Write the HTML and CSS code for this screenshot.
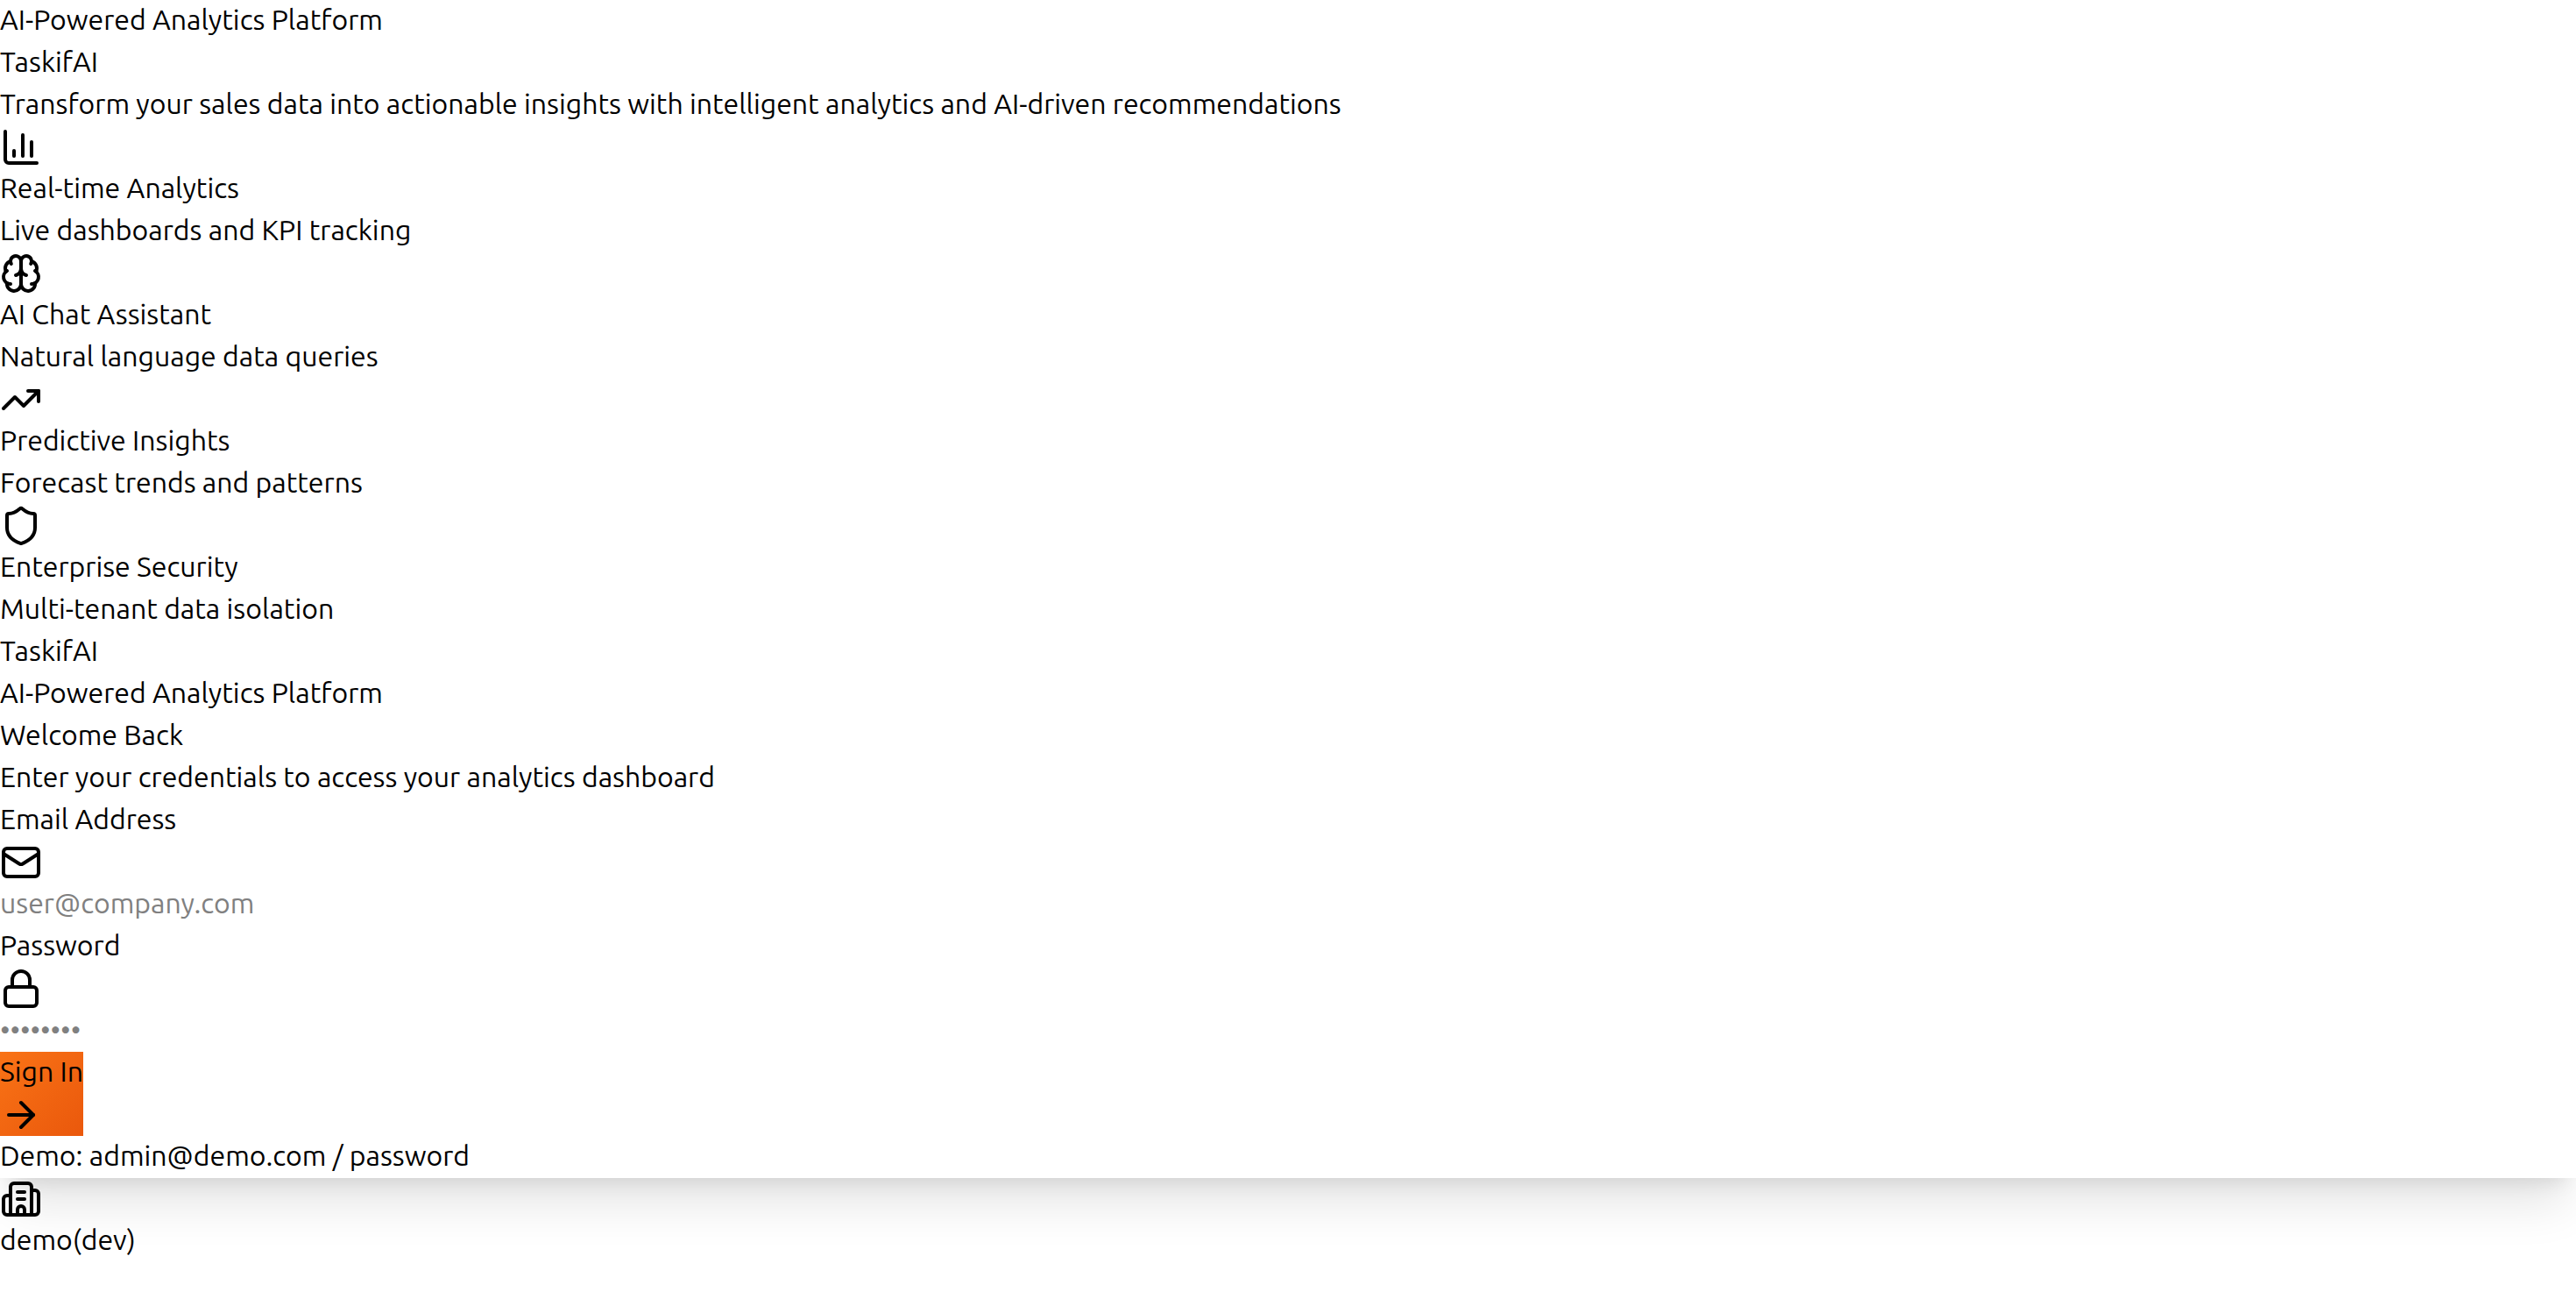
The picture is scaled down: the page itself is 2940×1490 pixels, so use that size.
FILE: index.html
```html
<!DOCTYPE html>
<html lang="en">
<head>
<meta charset="utf-8">
<meta name="viewport" content="width=device-width, initial-scale=1">
<title>TaskifAI</title>
<link rel="stylesheet" href="styles.css">
</head>
<body>
<main class="login">
  <section class="intro">
    <p class="line">AI-Powered Analytics Platform</p>
    <h1 class="line">TaskifAI</h1>
    <p class="line">Transform your sales data into actionable insights with intelligent analytics and AI-driven recommendations</p>
    <article>
      <svg class="icon" viewBox="0 0 24 24" aria-hidden="true"><path d="M3 3v16a2 2 0 0 0 2 2h16"/><path d="M18 17V9"/><path d="M13 17V5"/><path d="M8 17v-3"/></svg>
      <h2 class="line">Real-time Analytics</h2>
      <p class="line">Live dashboards and KPI tracking</p>
    </article>
    <article>
      <svg class="icon" viewBox="0 0 24 24" aria-hidden="true"><path d="M12 18V5"/><path d="M15 13a4.17 4.17 0 0 1-3-4 4.17 4.17 0 0 1-3 4"/><path d="M17.598 6.5A3 3 0 1 0 12 5a3 3 0 1 0-5.598 1.5"/><path d="M17.997 5.125a4 4 0 0 1 2.526 5.77"/><path d="M18 18a4 4 0 0 0 2-7.464"/><path d="M19.967 17.483A4 4 0 1 1 12 18a4 4 0 1 1-7.967-.517"/><path d="M6 18a4 4 0 0 1-2-7.464"/><path d="M6.003 5.125a4 4 0 0 0-2.526 5.77"/></svg>
      <h2 class="line">AI Chat Assistant</h2>
      <p class="line">Natural language data queries</p>
    </article>
    <article>
      <svg class="icon" viewBox="0 0 24 24" aria-hidden="true"><path d="M16 7h6v6"/><path d="m22 7-8.500 8.500-5-5L2 17"/></svg>
      <h2 class="line">Predictive Insights</h2>
      <p class="line">Forecast trends and patterns</p>
    </article>
    <article>
      <svg class="icon" viewBox="0 0 24 24" aria-hidden="true"><path d="M20 13c0 5-3.500 7.500-7.660 8.950a1 1 0 0 1-.67-.01C7.500 20.500 4 18 4 13V6a1 1 0 0 1 1-1c2 0 4.500-1.200 6.240-2.720a1.170 1.170 0 0 1 1.520 0C14.510 3.810 17 5 19 5a1 1 0 0 1 1 1z"/></svg>
      <h2 class="line">Enterprise Security</h2>
      <p class="line">Multi-tenant data isolation</p>
    </article>
  </section>
  <header>
    <h2 class="line">TaskifAI</h2>
    <p class="line">AI-Powered Analytics Platform</p>
  </header>
  <section class="card">
    <h2 class="line">Welcome Back</h2>
    <p class="line">Enter your credentials to access your analytics dashboard</p>
    <form>
      <label class="line" for="email">Email Address</label>
      <svg class="icon" viewBox="0 0 24 24" aria-hidden="true"><path d="m22 7-8.991 5.727a2 2 0 0 1-2.009 0L2 7"/><rect x="2" y="4" width="20" height="16" rx="2"/></svg>
      <input class="line input" id="email" type="email" placeholder="user@company.com">
      <label class="line" for="password">Password</label>
      <svg class="icon" viewBox="0 0 24 24" aria-hidden="true"><rect x="3" y="11" width="18" height="11" rx="2"/><path d="M7 11V7a5 5 0 0 1 10 0v4"/></svg>
      <input class="line input" id="password" type="password" placeholder="••••••••">
      <button class="submit" type="submit">
        <span class="line">Sign In</span>
        <svg class="icon" viewBox="0 0 24 24" aria-hidden="true"><path d="M5 12h14"/><path d="m12 5 7 7-7 7"/></svg>
      </button>
    </form>
    <p class="line">Demo: admin@demo.com / password</p>
  </section>
  <footer class="tenant">
    <svg class="icon" viewBox="0 0 24 24" aria-hidden="true"><path d="M10 12h4"/><path d="M10 8h4"/><path d="M14 21v-3a2 2 0 0 0-4 0v3"/><path d="M6 10H4a2 2 0 0 0-2 2v7a2 2 0 0 0 2 2h16a2 2 0 0 0 2-2V9a2 2 0 0 0-2-2h-2"/><path d="M6 21V5a2 2 0 0 1 2-2h8a2 2 0 0 1 2 2v16"/></svg>
    <p class="line">demo(dev)</p>
  </footer>
</main>
</body>
</html>
```
FILE: styles.css
```css
*, *::before, *::after {
  box-sizing: border-box;
  margin: 0;
  padding: 0;
  border: 0;
}

body {
  background: #fff;
  color: #000;
  font-family: Ubuntu, "Noto Sans", sans-serif;
  font-size: 32px;
  line-height: 44px;
  overflow-x: hidden;
}

h1, h2 {
  font-size: inherit;
  font-weight: inherit;
}

.line {
  display: block;
  padding-bottom: 4px;
}

.icon {
  display: block;
  width: 48px;
  height: 48px;
  fill: none;
  stroke: currentColor;
  stroke-width: 2;
  stroke-linecap: round;
  stroke-linejoin: round;
}

.card {
  box-shadow: 0 40px 50px -10px rgb(0 0 0 / 0.1), 0 16px 20px -12px rgb(0 0 0 / 0.1);
}

.input {
  width: 100%;
  height: 48px;
  background: transparent;
  color: inherit;
  font: inherit;
  outline: none;
}

.input::placeholder {
  color: #808080;
  opacity: 1;
}

.submit {
  display: block;
  background: linear-gradient(135deg, #f97316, #ea580c);
  color: inherit;
  font: inherit;
  text-align: left;
}

.tenant {
  position: relative;
}
```
